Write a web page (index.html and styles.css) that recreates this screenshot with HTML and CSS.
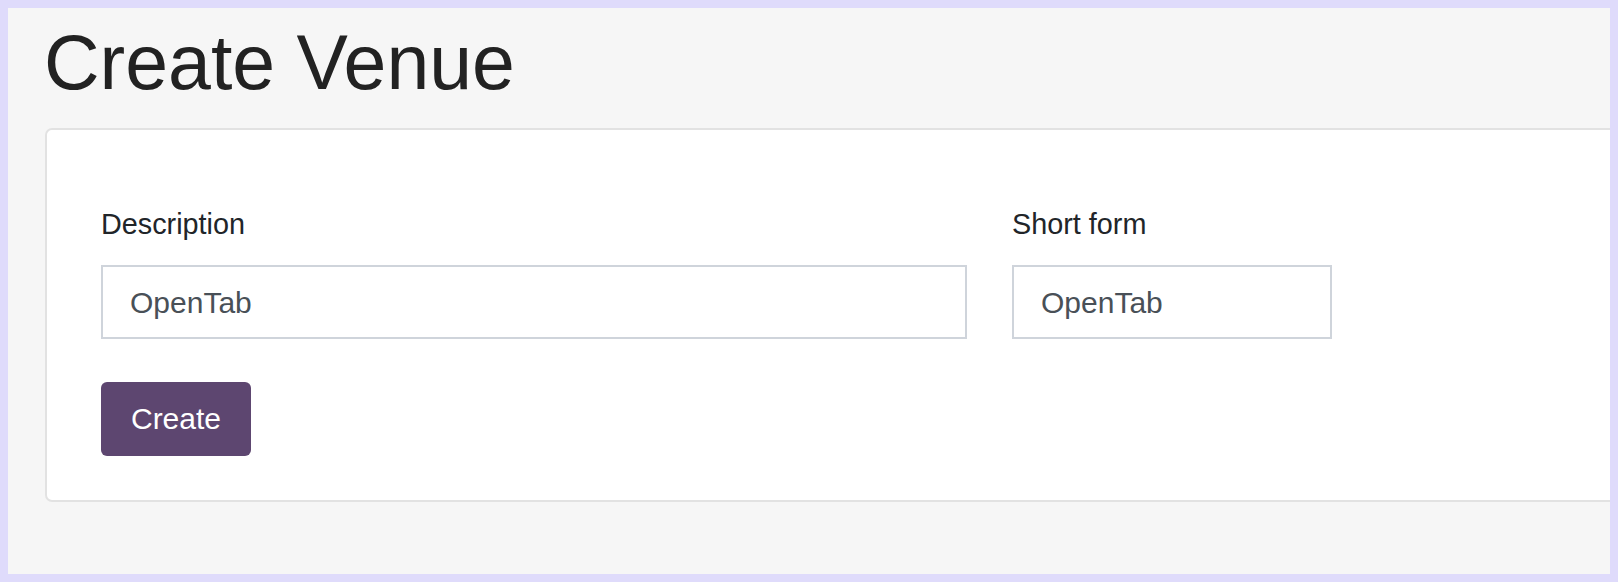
FILE: index.html
```html
<!DOCTYPE html>
<html lang="en">
<head>
<meta charset="utf-8">
<title>Create Venue</title>
<link rel="stylesheet" href="styles.css">
</head>
<body>
<div class="frame">
  <main class="page">
    <h1 class="title">Create Venue</h1>
    <section class="card">
      <form class="form">
        <div class="row">
          <div class="field field-desc">
            <label class="label" for="desc">Description</label>
            <input class="input" id="desc" type="text" value="OpenTab">
          </div>
          <div class="field field-short">
            <label class="label" for="short">Short form</label>
            <input class="input" id="short" type="text" value="OpenTab">
          </div>
        </div>
        <button class="btn" type="button">Create</button>
      </form>
    </section>
  </main>
</div>
</body>
</html>
```

FILE: styles.css
```css
* { box-sizing: border-box; }

html, body {
  margin: 0;
  padding: 0;
}

body {
  background: #dfdbfb;
  font-family: "Liberation Sans", Arial, Helvetica, sans-serif;
  color: #212529;
}

.frame {
  padding: 8px;
  height: 582px;
}

.page {
  background: #f6f6f6;
  height: 566px;
  overflow: hidden;
  padding: 0 0 0 37px;
}

.title {
  margin: 8px 0 20px -1px;
  font-size: 77px;
  font-weight: 400;
  line-height: 1.2;
  color: #222222;
  white-space: nowrap;
}

.card {
  width: 1620px;
  background: #ffffff;
  border: 2px solid #e2e2e2;
  border-radius: 7px;
  padding: 73px 54px 44px 54px;
}

.row {
  display: flex;
  gap: 45px;
}

.field {
  display: flex;
  flex-direction: column;
}

.field-desc { width: 866px; }
.field-short { width: 320px; }

.label {
  display: block;
  font-size: 28.8px;
  line-height: 43px;
  margin-bottom: 19px;
  color: #212529;
}

.input {
  display: block;
  width: 100%;
  height: 74px;
  border: 2px solid #cfd4db;
  border-radius: 0;
  background: #ffffff;
  padding: 2px 27px 0 27px;
  font-family: "Liberation Sans", Arial, Helvetica, sans-serif;
  font-size: 30px;
  color: #495057;
  outline: none;
}

.btn {
  display: block;
  margin-top: 43px;
  width: 150px;
  height: 74px;
  border: none;
  border-radius: 6px;
  background: #5d4670;
  color: #ffffff;
  font-family: "Liberation Sans", Arial, Helvetica, sans-serif;
  font-size: 30px;
  padding: 0;
  cursor: pointer;
}
```
